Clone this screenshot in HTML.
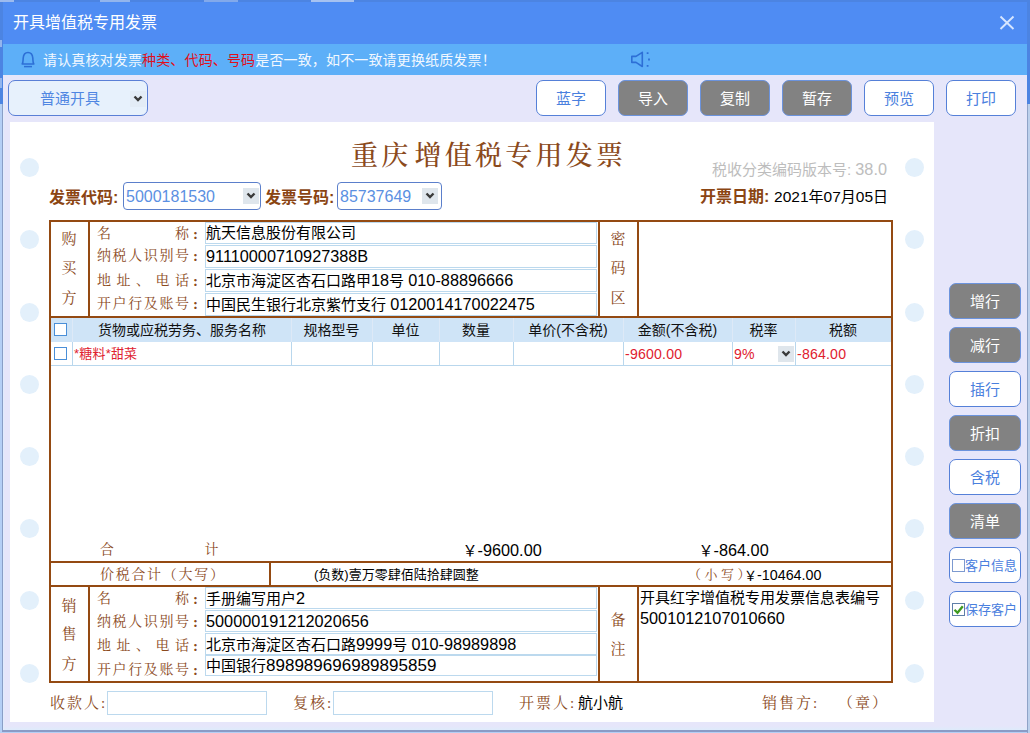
<!DOCTYPE html>
<html lang="zh-CN">
<head>
<meta charset="utf-8">
<title>开具增值税专用发票</title>
<style>
*{box-sizing:border-box;margin:0;padding:0}
html,body{width:1030px;height:733px;overflow:hidden}
body{position:relative;background:#b4cff5;font-family:"Liberation Sans","Noto Sans CJK SC",sans-serif;font-size:14px;color:#000}
.abs,.abs>*{position:absolute}
.sans{font-family:"Liberation Sans","Noto Sans CJK SC",sans-serif}
.kai{font-family:"Liberation Serif","Noto Serif CJK SC",serif;color:#8b4a1c;font-weight:400}
#win{left:3px;top:2px;width:1024px;height:728px;background:#e6e6fa;position:absolute}
#title{left:0;top:0;width:1024px;height:42px;background:#4f8cf3;position:absolute}
#title .t{position:absolute;left:10px;top:0;line-height:41px;font-size:16px;color:#fff}
#notice{left:0;top:42px;width:1024px;height:31px;background:#5daff8;position:absolute}
#notice .t{position:absolute;left:40px;top:1px;line-height:31px;font-size:14px;letter-spacing:.15px;color:#f2f8ff;white-space:nowrap}
#notice .t b{font-weight:normal;color:#e0101c}
.btn{position:absolute;width:70px;height:36px;border-radius:7px;border:1px solid #5580d8;background:#fff;color:#4a80de;font-size:15px;text-align:center;line-height:35px;white-space:nowrap}
.btn.g{background:#828282;color:#fff;border-color:#6b93dd}
#paper{position:absolute;left:10px;top:122px;width:924px;height:600px;background:#fff}
.dot{position:absolute;width:19px;height:19px;border-radius:50%;background:#e3f0fb}
.ln{position:absolute;background:#944a12}
.lab{position:absolute;white-space:nowrap}
.inp{position:absolute;border:1px solid #bcd9ee;background:#fff;font-size:15px;line-height:21px;padding-left:0;white-space:nowrap;overflow:hidden}
.sel{position:absolute;border:1px solid #5b7fcb;border-radius:4px;background:#fff;color:#5b90e2;font-size:16px;white-space:nowrap}
.arrow{position:absolute;width:16px;height:16px;background:#dfe6ec}
.arrow svg{position:absolute;left:3px;top:4px}
.cb{position:absolute;width:13px;height:13px;border:1px solid #4a8fd8;background:#fff}

.d{font-size:1.085em}
.d2{font-size:1.035em}
.d4{font-size:1.135em}
.d3{font-size:1.1em}
.bl{font-weight:bold;font-size:16px;line-height:22px;color:#8b4513}
.vc{width:20px;text-align:center;font-size:15px;line-height:22px}
.rl{width:92px;font-size:14px;line-height:22px;text-align:justify;text-align-last:justify;white-space:normal}
.rc{font-size:15px;line-height:22px;font-weight:700}
.hd{text-align:center;font-size:14px;line-height:24px;color:#111}
.gl{position:absolute;background:#b9d7ed}
.gh{position:absolute;background:#dde9f7}
.rd{color:#e0202e;font-size:13px;line-height:22px;letter-spacing:.2px}
.ft{font-size:15px;line-height:22px;letter-spacing:2px}
</style>
</head>
<body>
<div style="position:absolute;left:0;top:0;width:1030px;height:104px;background:#4c84e2"></div>
<div style="position:absolute;left:1027px;top:104px;width:3px;height:629px;background:#bcd0ec;border-left:1px solid #8fa3c7"></div>
<div style="position:absolute;left:2px;top:104px;width:1px;height:627px;background:#8a9ec6"></div>
<div style="position:absolute;left:2px;top:730px;width:1026px;height:1.500px;background:#8a9bc6"></div>
<div style="position:absolute;left:0;top:0;width:14px;height:2px;background:rgba(255,255,255,.45)"></div>
<div style="position:absolute;left:100px;top:0;width:30px;height:2px;background:rgba(255,255,255,.4)"></div>
<div style="position:absolute;left:204px;top:0;width:34px;height:2px;background:rgba(255,255,255,.3)"></div>
<div style="position:absolute;left:311px;top:0;width:43px;height:2px;background:rgba(255,255,255,.5)"></div>
<div style="position:absolute;left:0;top:40px;width:2px;height:7px;background:rgba(255,255,255,.4)"></div>
<div style="position:absolute;left:0;top:78px;width:2px;height:10px;background:rgba(255,255,255,.4)"></div>
<div id="win">
  <div id="title"><span class="t">开具增值税专用发票</span>
    <svg style="position:absolute;left:996px;top:13px" width="16" height="16" viewBox="0 0 16 16"><path d="M1.500 1.500 L14.500 14 M14.500 1.500 L1.500 14" stroke="#d6e6ff" stroke-width="1.900" fill="none"/></svg>
  </div>
  <div style="position:absolute;left:0;top:724px;width:1024px;height:4px;background:linear-gradient(#e6e6fa,#deebfb)"></div>
  <div style="position:absolute;left:0;top:102px;width:1px;height:626px;background:#e0ecfe"></div>
  <div id="notice">
    <svg style="position:absolute;left:17px;top:7px" width="16" height="17" viewBox="0 0 16 17"><path d="M2.2 13 C3.2 11.5 3 9.5 3.2 7 C3.5 3.5 5.5 1.5 8 1.5 C10.500 1.5 12.500 3.5 12.800 7 C13 9.5 12.800 11.5 13.800 13 Z" fill="none" stroke="#2d6fd6" stroke-width="1.6" stroke-linejoin="round"/><path d="M4 15.600 H12" stroke="#2d6fd6" stroke-width="1.500"/></svg>
    <span class="t">请认真核对发票<b>种类、代码、号码</b>是否一致，如不一致请更换纸质发票！</span>
    <svg style="position:absolute;left:627px;top:7px" width="24" height="17" viewBox="0 0 24 17"><path d="M1.800 5.400 H6 L12.300 1.300 V15.500 L6 11.400 H1.800 Z" fill="none" stroke="#2d6fd6" stroke-width="1.600" stroke-linejoin="round"/><path d="M17.600 1.200 v1.800 M19 7.600 v1.800 M17.600 14 v1.800" stroke="#2d6fd6" stroke-width="1.800"/></svg>
  </div>
</div>

<div id="ui" style="position:absolute;left:0;top:0;width:1030px;height:733px">
  <!-- toolbar -->
  <div class="sel" style="left:8px;top:80px;width:140px;height:36px;border-radius:7px;background:#e7f1fc;border-color:#5a7fd6;font-size:15px;line-height:35px;padding-left:31px;color:#4f86e2">普通开具<span class="arrow" style="left:121px;top:10px;background:#e3ecf6"><svg width="10" height="8" viewBox="0 0 10 8"><path d="M1.500 1.500 L5 5 L8.500 1.500" fill="none" stroke="#3a3a3a" stroke-width="2.400"/></svg></span></div>
  <div class="btn" style="left:536px;top:80px">蓝字</div>
  <div class="btn g" style="left:618px;top:80px">导入</div>
  <div class="btn g" style="left:700px;top:80px">复制</div>
  <div class="btn g" style="left:782px;top:80px">暂存</div>
  <div class="btn" style="left:864px;top:80px">预览</div>
  <div class="btn" style="left:946px;top:80px">打印</div>
  <!-- side buttons -->
  <div class="btn g" style="left:949px;top:283px;width:72px">增行</div>
  <div class="btn g" style="left:949px;top:327px;width:72px">减行</div>
  <div class="btn" style="left:949px;top:371px;width:72px">插行</div>
  <div class="btn g" style="left:949px;top:415px;width:72px">折扣</div>
  <div class="btn" style="left:949px;top:459px;width:72px">含税</div>
  <div class="btn g" style="left:949px;top:503px;width:72px">清单</div>
  <div class="btn" style="left:949px;top:547px;width:72px;font-size:13px;text-align:left;padding-left:15px"><span class="cb" style="left:2px;top:11px;border-color:#7d9ad0"></span>客户信息</div>
  <div class="btn" style="left:949px;top:591px;width:72px;font-size:13px;text-align:left;padding-left:15px"><span class="cb" style="left:2px;top:11px;border-color:#5f7fa8"><svg style="position:absolute;left:0;top:0" width="11" height="11" viewBox="0 0 11 11"><path d="M1.500 5.800 L4.500 8.800 L9.800 2.200" fill="none" stroke="#3f9a1f" stroke-width="2.300"/></svg></span>保存客户</div>
  <div id="paper"></div>
  <div class="dot" style="left:20px;top:158.0px"></div><div class="dot" style="left:905px;top:158.0px"></div>
  <div class="dot" style="left:20px;top:230.0px"></div><div class="dot" style="left:905px;top:230.0px"></div>
  <div class="dot" style="left:20px;top:302.5px"></div><div class="dot" style="left:905px;top:302.5px"></div>
  <div class="dot" style="left:20px;top:374.5px"></div><div class="dot" style="left:905px;top:374.5px"></div>
  <div class="dot" style="left:20px;top:447.0px"></div><div class="dot" style="left:905px;top:447.0px"></div>
  <div class="dot" style="left:20px;top:519.0px"></div><div class="dot" style="left:905px;top:519.0px"></div>
  <div class="dot" style="left:20px;top:591.0px"></div><div class="dot" style="left:905px;top:591.0px"></div>
  <div class="dot" style="left:20px;top:663.5px"></div><div class="dot" style="left:905px;top:663.5px"></div>
  <div class="lab kai" id="ttl" style="left:351px;top:137px;font-size:27px;line-height:38px;letter-spacing:3.250px;word-spacing:-7px;font-weight:500">重庆 增值税专用发票</div>
  <div class="lab" id="ver" style="right:143px;top:158px;font-size:15px;line-height:22px;color:#bdbdbd">税收分类编码版本号: <span class="d">38.0</span></div>
  <div class="lab bl" id="l1" style="left:49px;top:187px">发票代码:</div>
  <div class="sel" style="left:123px;top:182px;width:138px;height:28px;line-height:28px;padding-left:2px">5000181530<span class="arrow" style="left:119px;top:5px"><svg width="10" height="8" viewBox="0 0 10 8"><path d="M1.500 1.500 L5 5 L8.500 1.500" fill="none" stroke="#3a3a3a" stroke-width="2.400"/></svg></span></div>
  <div class="lab bl" id="l2" style="left:265px;top:187px">发票号码:</div>
  <div class="sel" style="left:337px;top:182px;width:105px;height:28px;line-height:28px;padding-left:2px">85737649<span class="arrow" style="left:84px;top:5px"><svg width="10" height="8" viewBox="0 0 10 8"><path d="M1.500 1.500 L5 5 L8.500 1.500" fill="none" stroke="#3a3a3a" stroke-width="2.400"/></svg></span></div>
  <div class="lab bl" id="l3" style="left:700px;top:186px">开票日期:</div>
  <div class="lab" id="dt" style="left:774px;top:186px;font-size:15px;line-height:22px"><span class="d2">2021</span>年<span class="d2">07</span>月<span class="d2">05</span>日</div>
  <div class="ln" style="left:49px;top:220px;width:844px;height:2px"></div>
  <div class="ln" style="left:49px;top:316px;width:844px;height:2px"></div>
  <div class="ln" style="left:49px;top:561px;width:844px;height:2px"></div>
  <div class="ln" style="left:49px;top:585px;width:844px;height:2px"></div>
  <div class="ln" style="left:49px;top:681px;width:844px;height:2px"></div>
  <div class="ln" style="left:49px;top:220px;width:2px;height:463px"></div>
  <div class="ln" style="left:891px;top:220px;width:2px;height:463px"></div>
  <div class="ln" style="left:88px;top:220px;width:2px;height:98px"></div>
  <div class="ln" style="left:598px;top:220px;width:2px;height:98px"></div>
  <div class="ln" style="left:637px;top:220px;width:2px;height:98px"></div>
  <div class="ln" style="left:88px;top:585px;width:2px;height:98px"></div>
  <div class="ln" style="left:598px;top:585px;width:2px;height:98px"></div>
  <div class="ln" style="left:637px;top:585px;width:2px;height:98px"></div>
  <div class="ln" style="left:269px;top:561px;width:2px;height:26px"></div>
  <div class="lab kai vc" style="left:59px;top:228px">购</div>
  <div class="lab kai vc" style="left:59px;top:257px">买</div>
  <div class="lab kai vc" style="left:59px;top:287px">方</div>
  <div class="lab kai vc" style="left:608px;top:228px">密</div>
  <div class="lab kai vc" style="left:608px;top:257px">码</div>
  <div class="lab kai vc" style="left:608px;top:287px">区</div>
  <div class="lab kai vc" style="left:59px;top:595px">销</div>
  <div class="lab kai vc" style="left:59px;top:623px">售</div>
  <div class="lab kai vc" style="left:59px;top:653px">方</div>
  <div class="lab kai vc" style="left:608px;top:609px">备</div>
  <div class="lab kai vc" style="left:608px;top:638px">注</div>
  <div class="lab kai rl" style="left:97px;top:223px">名<i></i>称</div><div class="lab kai rc" style="left:193px;top:223px">:</div>
  <div class="lab kai rl" style="left:97px;top:245px">纳税人识别号</div><div class="lab kai rc" style="left:193px;top:245px">:</div>
  <div class="lab kai rl" style="left:97px;top:270px">地址、电话</div><div class="lab kai rc" style="left:193px;top:270px">:</div>
  <div class="lab kai rl" style="left:97px;top:293px">开户行及账号</div><div class="lab kai rc" style="left:193px;top:293px">:</div>
  <div class="inp" style="left:205px;top:222px;width:392px;height:22px;line-height:20px">航天信息股份有限公司</div>
  <div class="inp" style="left:205px;top:245px;width:392px;height:23px;line-height:21px"><span class="d">91110000710927388B</span></div>
  <div class="inp" style="left:205px;top:269px;width:392px;height:23px;line-height:21px">北京市海淀区杏石口路甲<span class="d">18</span>号 <span class="d">010-88896666</span></div>
  <div class="inp" style="left:205px;top:293px;width:392px;height:23px;line-height:21px">中国民生银行北京紫竹支行 <span class="d">0120014170022475</span></div>
  <div class="lab kai rl" style="left:97px;top:588px">名<i></i>称</div><div class="lab kai rc" style="left:193px;top:588px">:</div>
  <div class="lab kai rl" style="left:97px;top:611px">纳税人识别号</div><div class="lab kai rc" style="left:193px;top:611px">:</div>
  <div class="lab kai rl" style="left:97px;top:635px">地址、电话</div><div class="lab kai rc" style="left:193px;top:635px">:</div>
  <div class="lab kai rl" style="left:97px;top:659px">开户行及账号</div><div class="lab kai rc" style="left:193px;top:659px">:</div>
  <div class="inp" style="left:205px;top:587px;width:392px;height:22px;line-height:20px">手册编写用户<span class="d">2</span></div>
  <div class="inp" style="left:205px;top:610px;width:392px;height:22px;line-height:20px"><span class="d">500000191212020656</span></div>
  <div class="inp" style="left:205px;top:633px;width:392px;height:22px;line-height:20px">北京市海淀区杏石口路<span class="d">9999</span>号 <span class="d">010-98989898</span></div>
  <div class="inp" style="left:205px;top:655px;width:392px;height:21px;line-height:19px">中国银行<span class="d4">898989696989895859</span></div>
  <div style="position:absolute;left:51px;top:318px;width:840px;height:24px;background:#cfe4f7"></div>
  <div class="lab hd" style="left:73px;top:318px;width:218px">货物或应税劳务、服务名称</div>
  <div class="lab hd" style="left:291px;top:318px;width:81px">规格型号</div>
  <div class="lab hd" style="left:372px;top:318px;width:67px">单位</div>
  <div class="lab hd" style="left:439px;top:318px;width:74px">数量</div>
  <div class="lab hd" style="left:513px;top:318px;width:110px">单价(不含税)</div>
  <div class="lab hd" style="left:623px;top:318px;width:109px">金额(不含税)</div>
  <div class="lab hd" style="left:732px;top:318px;width:63px">税率</div>
  <div class="lab hd" style="left:795px;top:318px;width:96px">税额</div>
  <div class="gh" style="left:72px;top:318px;width:1px;height:24px"></div><div class="gl" style="left:72px;top:342px;width:1px;height:24px"></div>
  <div class="gh" style="left:291px;top:318px;width:1px;height:24px"></div><div class="gl" style="left:291px;top:342px;width:1px;height:24px"></div>
  <div class="gh" style="left:372px;top:318px;width:1px;height:24px"></div><div class="gl" style="left:372px;top:342px;width:1px;height:24px"></div>
  <div class="gh" style="left:439px;top:318px;width:1px;height:24px"></div><div class="gl" style="left:439px;top:342px;width:1px;height:24px"></div>
  <div class="gh" style="left:513px;top:318px;width:1px;height:24px"></div><div class="gl" style="left:513px;top:342px;width:1px;height:24px"></div>
  <div class="gh" style="left:623px;top:318px;width:1px;height:24px"></div><div class="gl" style="left:623px;top:342px;width:1px;height:24px"></div>
  <div class="gh" style="left:732px;top:318px;width:1px;height:24px"></div><div class="gl" style="left:732px;top:342px;width:1px;height:24px"></div>
  <div class="gh" style="left:795px;top:318px;width:1px;height:24px"></div><div class="gl" style="left:795px;top:342px;width:1px;height:24px"></div>
  <div class="gl" style="left:51px;top:365px;width:840px;height:1px"></div>
  <div class="cb" style="left:54px;top:323px"></div><div class="cb" style="left:54px;top:347px"></div>
  <div class="lab rd" style="left:74px;top:343px">*糖料*甜菜</div>
  <div class="lab rd" style="left:625px;top:343px"><span class="d">-9600.00</span></div>
  <div class="lab rd" style="left:734px;top:343px"><span class="d">9%</span></div>
  <span class="arrow" style="left:778px;top:346px"><svg width="10" height="8" viewBox="0 0 10 8"><path d="M1.500 1.500 L5 5 L8.500 1.500" fill="none" stroke="#3a3a3a" stroke-width="2.400"/></svg></span>
  <div class="lab rd" style="left:797px;top:343px"><span class="d">-864.00</span></div>
  <div class="lab kai" style="left:100px;top:539px;font-size:14px;line-height:22px">合</div><div class="lab kai" style="left:204.500px;top:539px;font-size:14px;line-height:22px">计</div>
  <div class="lab" id="t1" style="left:462.5px;top:539px;font-size:15px;line-height:22px">￥<span class="d">-9600.00</span></div>
  <div class="lab" id="t2" style="left:698.5px;top:539px;font-size:15px;line-height:22px">￥<span class="d">-864.00</span></div>
  <div class="lab kai" id="t3" style="left:100px;top:564px;font-size:14px;line-height:22px;letter-spacing:1.700px">价税合计（大写）</div>
  <div class="lab" id="t4" style="left:314px;top:564px;font-size:13px;line-height:22px">(负数)壹万零肆佰陆拾肆圆整</div>
  <div class="lab kai" id="t5" style="left:688px;top:564px;font-size:13px;line-height:22px;letter-spacing:3.5px">（小写）</div>
  <div class="lab" id="t6" style="left:744px;top:564px;font-size:13px;line-height:22px">￥<span class="d3">-10464.00</span></div>
  <div class="lab" id="rm" style="left:640px;top:588px;font-size:15px;line-height:20px">开具红字增值税专用发票信息表编号<br><span class="d">5001012107010660</span></div>
  <div class="lab kai ft" id="f1" style="left:50px;top:692px">收款人:</div>
  <div class="inp" style="left:107px;top:691px;width:160px;height:24px"></div>
  <div class="lab kai ft" id="f2" style="left:293px;top:692px">复核:</div>
  <div class="inp" style="left:333px;top:691px;width:160px;height:24px"></div>
  <div class="lab kai ft" id="f3" style="left:519px;top:692px">开票人:</div>
  <div class="lab" id="f4" style="left:578px;top:692px;font-size:15px;line-height:22px">航小航</div>
  <div class="lab kai ft" id="f5" style="left:762px;top:692px">销售方:</div>
  <div class="lab kai ft" id="f6" style="left:838px;top:692px">（章）</div>
</div>
</body>
</html>
